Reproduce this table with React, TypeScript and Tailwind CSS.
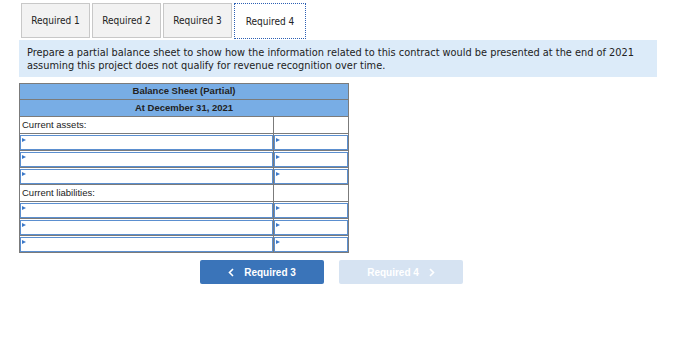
import React from "react";

const tabs = ["Required 1", "Required 2", "Required 3", "Required 4"];

function Marker() {
  return (
    <span className="absolute left-[1px] top-[2px] h-0 w-0 border-y-[2.5px] border-l-[4px] border-y-transparent border-l-[#3b78c9]" />
  );
}

function InputRow() {
  return (
    <tr className="h-[17px]">
      <td className="border border-[#7b7b7b] p-0">
        <div className="relative h-[15px] border border-[#5b8fd0]">
          <Marker />
        </div>
      </td>
      <td className="border border-[#7b7b7b] p-0">
        <div className="relative h-[15px] border border-[#5b8fd0]">
          <Marker />
        </div>
      </td>
    </tr>
  );
}

function LabelRow({ label }: { label: string }) {
  return (
    <tr className="h-[17px]">
      <td className="border border-[#7b7b7b] px-[2px] py-0 text-left align-middle text-[9.5px] text-[#222]">
        {label}
      </td>
      <td className="border border-[#7b7b7b] p-0" />
    </tr>
  );
}

export default function App() {
  return (
    <div className="h-[343px] w-[691px] bg-white pl-[19px] pt-[3px]">
      {/* tab strip */}
      <div className="flex gap-[2px] pl-[2px]">
        {tabs.map((t, i) => {
          const active = i === 3;
          return (
            <div
              key={t}
              className={
                active
                  ? "flex h-[36px] w-[72px] items-center justify-center border border-dotted border-[#2c5fb3] bg-white text-[10px] text-[#222] [font-family:'DejaVu_Sans_Condensed','DejaVu_Sans',sans-serif]"
                  : "flex h-[35px] w-[69px] items-center justify-center border border-[#c8c8c8] bg-[#f2f2f2] text-[10px] text-[#222] [font-family:'DejaVu_Sans_Condensed','DejaVu_Sans',sans-serif]"
              }
            >
              {t}
            </div>
          );
        })}
      </div>

      {/* instructions */}
      <div className="mt-[1px] w-[638px] bg-[#dcebf9] px-[8px] pb-[5px] pt-[6px] text-[9.8px] leading-[13px] text-[#222] [font-family:'DejaVu_Sans',sans-serif]">
        Prepare a partial balance sheet to show how the information related to this contract would be presented at the end of 2021 assuming this project does not qualify for revenue recognition over time.
      </div>

      {/* balance sheet */}
      <table className="mt-[6px] w-[330px] border-collapse [font-family:'Liberation_Sans',Arial,sans-serif]">
        <colgroup>
          <col className="w-[255px]" />
          <col className="w-[75px]" />
        </colgroup>
        <thead>
          <tr className="h-[16px]">
            <th
              colSpan={2}
              className="border border-[#7b7b7b] bg-[#78ade5] p-0 text-center text-[9.5px] font-bold text-[#222]"
            >
              Balance Sheet (Partial)
            </th>
          </tr>
          <tr className="h-[17px]">
            <th
              colSpan={2}
              className="border border-[#7b7b7b] bg-[#78ade5] p-0 text-center text-[9.5px] font-bold text-[#222]"
            >
              At December 31, 2021
            </th>
          </tr>
        </thead>
        <tbody>
          <LabelRow label="Current assets:" />
          <InputRow />
          <InputRow />
          <InputRow />
          <LabelRow label="Current liabilities:" />
          <InputRow />
          <InputRow />
          <InputRow />
        </tbody>
      </table>

      {/* navigation */}
      <div className="mt-[7px] flex gap-[15px] pl-[181px] [font-family:'Liberation_Sans',Arial,sans-serif]">
        <button className="flex h-[24px] w-[124px] items-center justify-center gap-[10px] rounded-[2px] bg-[#3a74b9] text-[10px] font-bold text-white">
          <svg width="6" height="9" viewBox="0 0 6 9" fill="none">
            <path d="M5 1 L1.5 4.5 L5 8" stroke="white" strokeWidth="1.6" />
          </svg>
          <span>Required 3</span>
        </button>
        <button className="flex h-[24px] w-[124px] items-center justify-center gap-[10px] rounded-[2px] bg-[#d6e3f2] text-[10px] font-bold text-white">
          <span>Required 4</span>
          <svg width="6" height="9" viewBox="0 0 6 9" fill="none">
            <path d="M1 1 L4.5 4.5 L1 8" stroke="white" strokeWidth="1.6" />
          </svg>
        </button>
      </div>
    </div>
  );
}
